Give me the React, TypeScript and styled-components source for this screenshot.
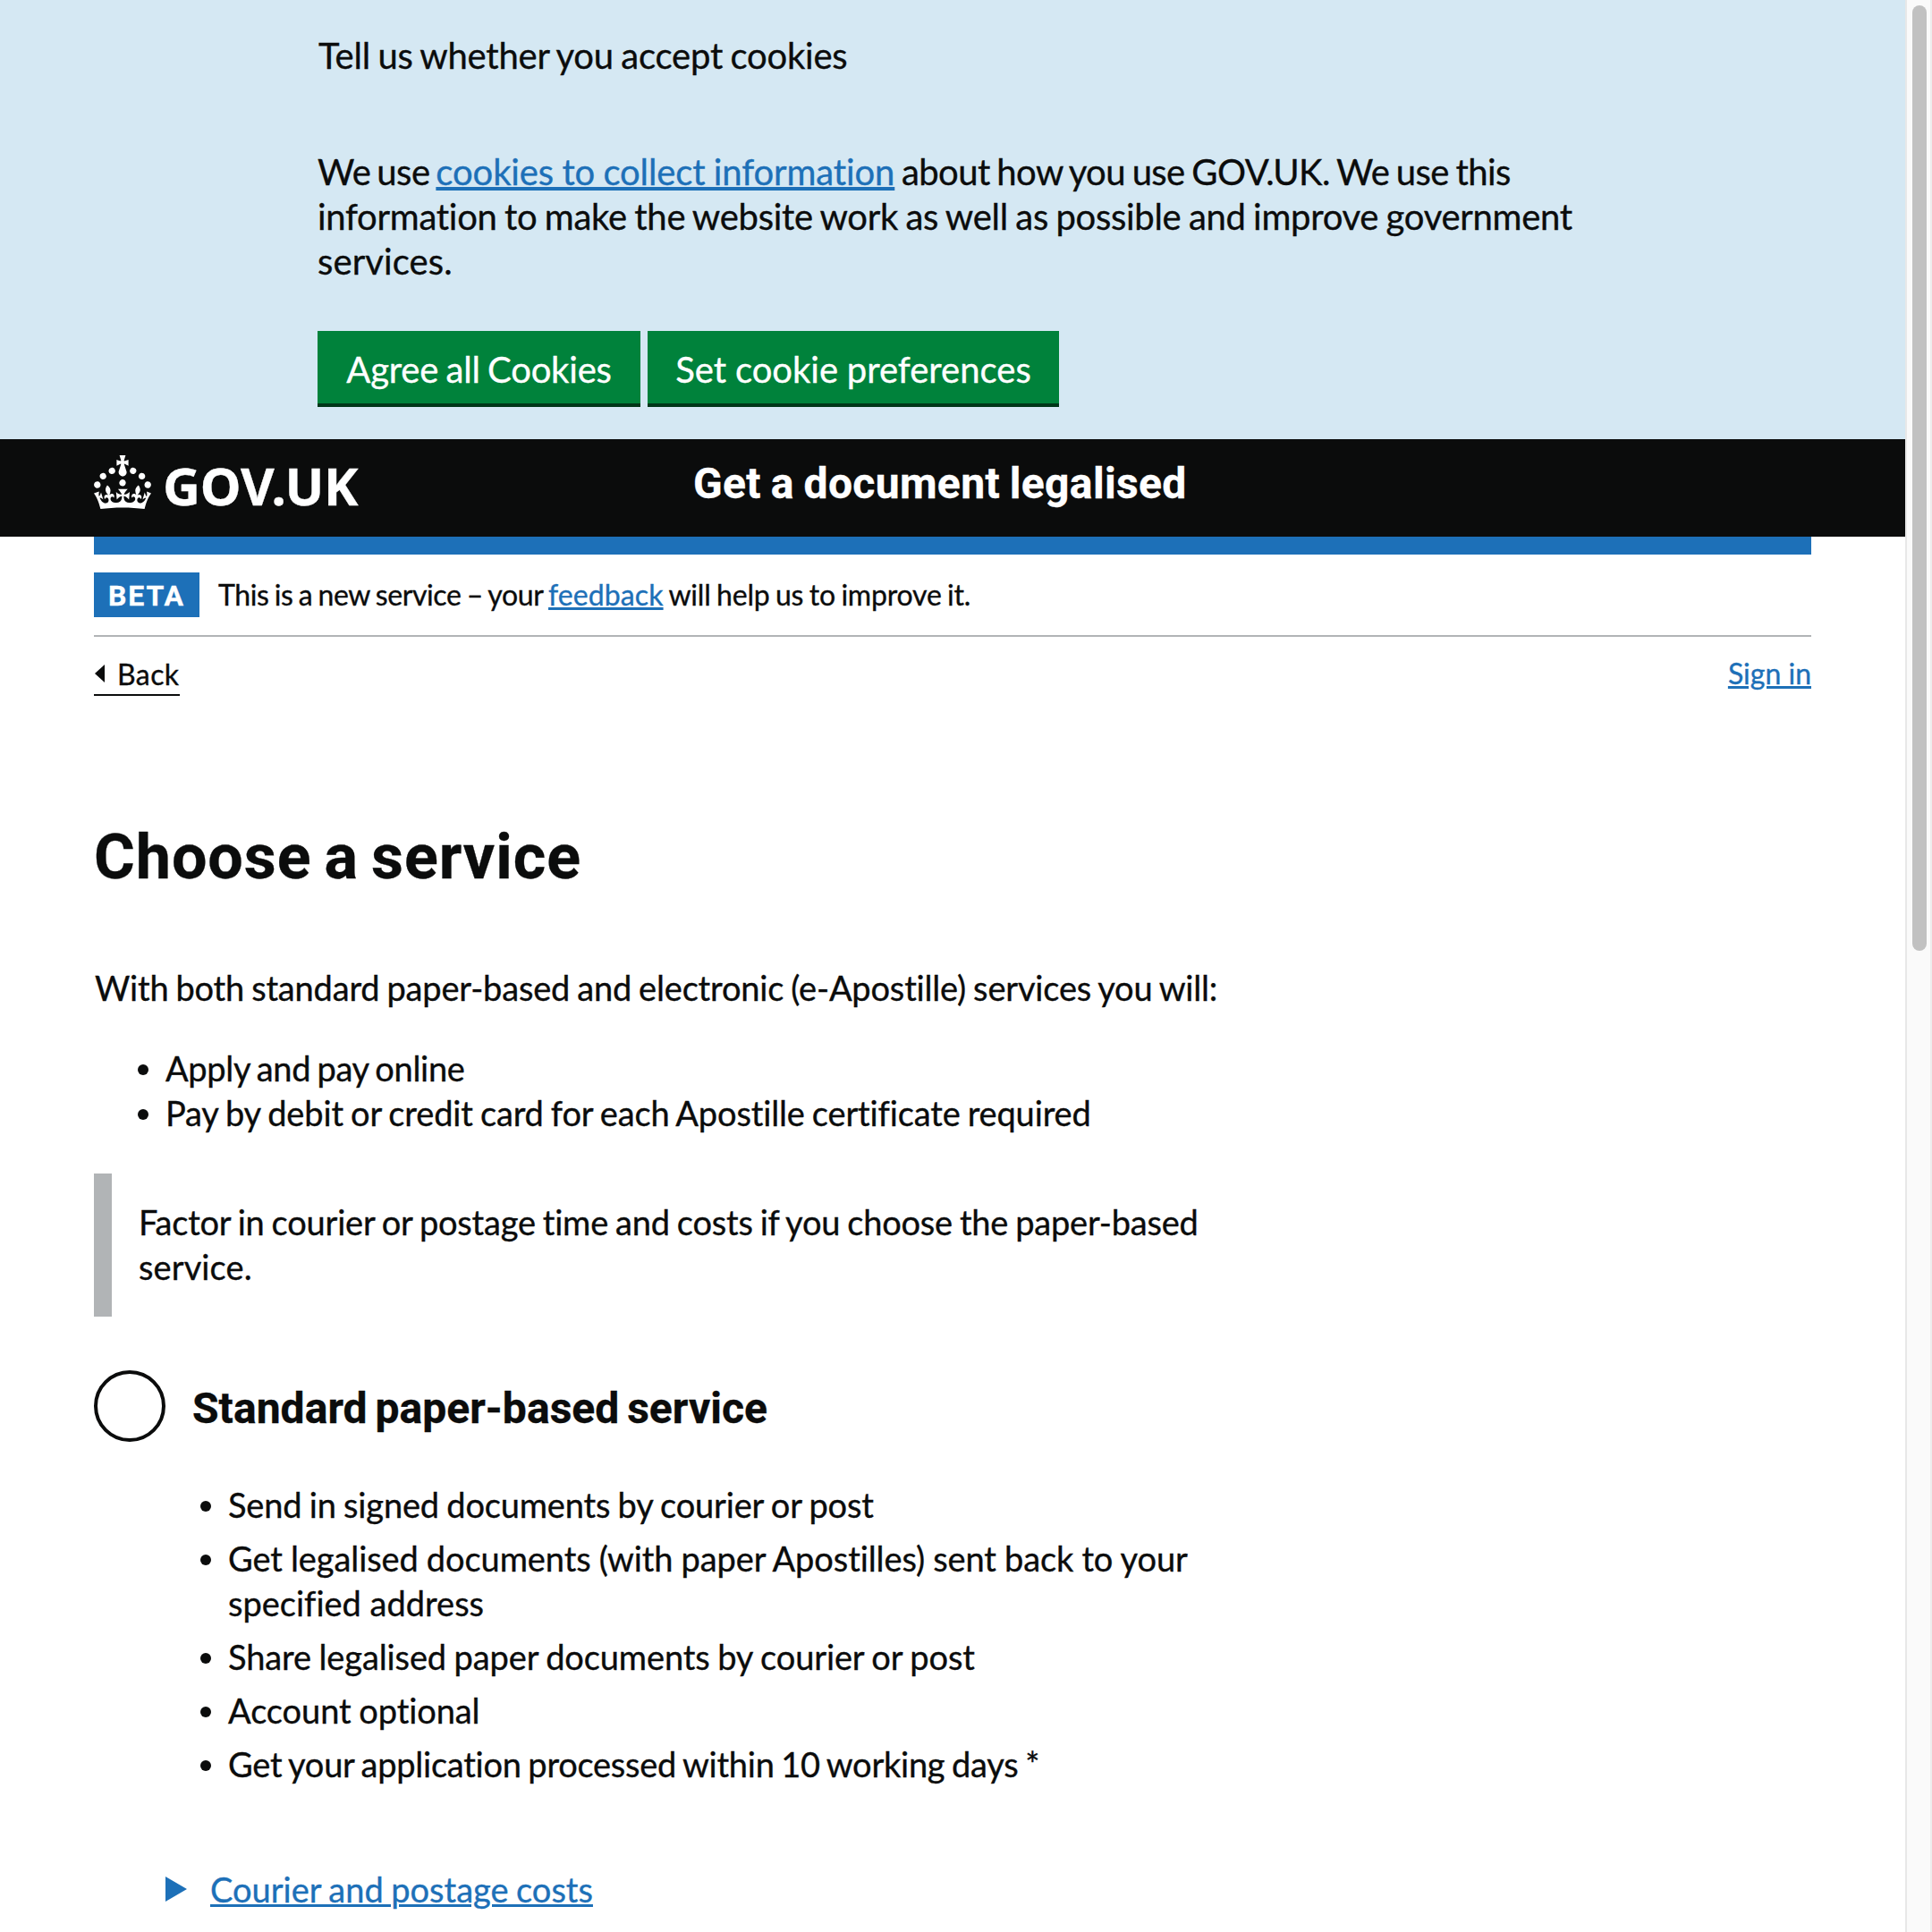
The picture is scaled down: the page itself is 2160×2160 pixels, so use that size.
import React from 'react';
import styled, { createGlobalStyle } from 'styled-components';

const ink = '#0b0c0c';
const blue = '#1d70b8';
const grey = '#b1b4b6';
const bodyFont = '"Lato", "Noto Sans", sans-serif';
const boldFont = '"Roboto", "Noto Sans", sans-serif';

const GlobalStyle = createGlobalStyle`
  *, *::before, *::after { box-sizing: border-box; }
  html, body { margin: 0; background: #fff; }
  body { height: 2160px; overflow: hidden; }
`;

const Window = styled.div`
  display: flex;
  width: 2160px;
  height: 2160px;
  overflow: hidden;
  color: ${ink};
  font-family: ${bodyFont};
  font-size: 38px;
  line-height: 50px;
  font-variant-ligatures: none;
  -webkit-text-stroke: 0.35px currentColor;
`;

const Page = styled.div`
  flex: 1;
  min-width: 0;
  background: #fff;
`;

const Track = styled.div`
  width: 30px;
  padding: 6px 4px 0 6px;
  background: #fafafa;
  border-left: 2px solid #e8e8e8;
  border-right: 2px solid #ededed;
`;

const Thumb = styled.div`
  width: 16px;
  height: 1057px;
  border-radius: 8px;
  background: #c1c1c1;
`;

/* One line of text, with its word and letter spacing */
const Line = styled.span<{ $ws?: number; $ls?: number }>`
  display: block;
  white-space: nowrap;
  word-spacing: ${(p) => p.$ws ?? 0}px;
  letter-spacing: ${(p) => p.$ls ?? 0}px;
`;

const Run = styled(Line)`
  display: inline;
`;

const Link = styled.a<{ $ws?: number; $ls?: number; $thick?: number; $drop?: number }>`
  color: ${blue};
  white-space: nowrap;
  word-spacing: ${(p) => p.$ws ?? 0}px;
  letter-spacing: ${(p) => p.$ls ?? 0}px;
  text-decoration: underline;
  text-decoration-thickness: ${(p) => p.$thick ?? 3}px;
  text-underline-offset: ${(p) => p.$drop ?? 2}px;
`;

const CookieBanner = styled.section`
  height: 491px;
  padding: 37px 0 0 355px;
  background: #d5e8f3;
  font-size: 40px;
`;

const CookieTitle = styled.div`
  padding-left: 1px;
`;

const CookieText = styled.p`
  margin: 80px 0 53px;
`;

const ButtonRow = styled.div`
  display: flex;
  gap: 8px;
`;

const Button = styled.button<{ $width: number }>`
  display: flex;
  justify-content: center;
  align-items: center;
  width: ${(p) => p.$width}px;
  height: 85px;
  padding: 4px 0;
  border: 0;
  background: #00823b;
  box-shadow: inset 0 -4px 0 #003618;
  color: #fff;
  font: inherit;
`;

const Header = styled.header`
  display: flex;
  height: 109px;
  padding-left: 105px;
  background: ${ink};
  color: #fff;
`;

const Brand = styled.div`
  display: flex;
  width: 670px;
  padding-top: 18px;
`;

const BrandName = styled.span`
  margin: 1px 0 0 13px;
  font: 700 58px/66px "Noto Sans", sans-serif;
  letter-spacing: -0.2px;
`;

const ServiceName = styled.div`
  padding-top: 20px;
  font: 700 48px/60px ${boldFont};
  letter-spacing: 0.35px;
  word-spacing: -1.5px;
`;

const Container = styled.div`
  width: 1920px;
  margin-left: 105px;
`;

const BlueBar = styled.div`
  height: 20px;
  background: ${blue};
`;

const PhaseBanner = styled.div`
  display: flex;
  height: 92px;
  padding-top: 20px;
  border-bottom: 2px solid ${grey};
  font-size: 32px;
`;

const Tag = styled.strong`
  width: 118px;
  height: 50px;
  padding: 1px 0 0 16px;
  margin-right: 21px;
  background: ${blue};
  color: #fff;
  font: 700 32px/50px ${boldFont};
  letter-spacing: 1.87px;
`;

const PhaseText = styled.div`
  white-space: nowrap;
`;

const NavRow = styled.div`
  display: flex;
  justify-content: space-between;
  align-items: flex-start;
  padding-top: 21px;
  font-size: 32px;
  line-height: 40px;
`;

const BackLink = styled.a`
  display: flex;
  align-items: flex-start;
  width: 96px;
  height: 45px;
  padding-top: 1px;
  border-bottom: 2px solid ${ink};
  color: ${ink};
  letter-spacing: 0.4px;
`;

const BackArrow = styled.svg`
  margin: 9px 14px 0 1px;
`;

const Title = styled.h1`
  margin: 140px 0 80px;
  font: 700 70px/80px ${boldFont};
  letter-spacing: 0.95px;
  word-spacing: -4.3px;
`;

const Lead = styled.p`
  margin: 0 0 39px;
  padding: 1px 0 0 1px;
`;

const List = styled.ul<{ $indent: number; $gap: number }>`
  display: grid;
  gap: ${(p) => p.$gap}px;
  margin: 0 0 -1px;
  padding: 1px 0 0 ${(p) => p.$indent}px;
  list-style: none;
`;

const Item = styled.li`
  display: flex;
  &::before {
    content: '';
    flex: none;
    width: 12px;
    height: 12px;
    margin: 21px 19px 0 0;
    border-radius: 50%;
    background: ${ink};
  }
`;

const Inset = styled.div`
  height: 160px;
  margin: 44px 0 60px;
  padding: 29px 0 0 30px;
  border-left: 20px solid ${grey};
`;

const RadioRow = styled.label`
  display: flex;
  height: 80px;
  margin-bottom: 44px;
`;

const Radio = styled.span`
  width: 80px;
  height: 80px;
  border: 4px solid ${ink};
  border-radius: 50%;
`;

const RadioLabel = styled.span`
  padding: 13px 0 0 30px;
  font: 700 48px/60px ${boldFont};
  letter-spacing: 0.05px;
  word-spacing: -3.2px;
`;

const Details = styled.div`
  display: flex;
  margin: 91px 0 0 80px;
`;

const Triangle = styled.svg`
  margin: 11px 26px 0 0;
`;

const crownPath =
  'M22.6 10.4c-1 .4-2-.1-2.4-1-.4-.9.1-2 1-2.4.9-.4 2 .1 2.4 1s-.1 2-1 2.4m-5.9 6.7c-.9.4-2-.1-2.4-1-.4-.9.1-2 1-2.4.9-.4 2 .1 2.4 1s-.1 2-1 2.4m10.8-3.7c-1 .4-2-.1-2.4-1-.4-.9.1-2 1-2.4.9-.4 2 .1 2.4 1s0 2-1 2.4m3.3 4.8c-1 .4-2-.1-2.4-1-.4-.9.1-2 1-2.4.9-.4 2 .1 2.4 1s-.1 2-1 2.4M17 4.7l2.3 1.2V2.5l-2.3.7-.2-.2.9-3h-3.4l.9 3-.2.2c-.1.1-2.3-.7-2.3-.7v3.4L15 4.7c.1.1.1.2.2.2l-1.3 4c-.1.2-.1.4-.1.6 0 1.1.8 2 1.9 2.2h.7c1-.2 1.9-1.1 1.9-2.1 0-.2 0-.4-.1-.6l-1.3-4c-.1-.2 0-.2.1-.3m-7.6 5.7c.9.4 2-.1 2.4-1 .4-.9-.1-2-1-2.4-.9-.4-2 .1-2.4 1s0 2 1 2.4m-5 3c.9.4 2-.1 2.4-1 .4-.9-.1-2-1-2.4-.9-.4-2 .1-2.4 1s.1 2 1 2.4m-3.2 4.8c.9.4 2-.1 2.4-1 .4-.9-.1-2-1-2.4-.9-.4-2 .1-2.4 1s0 2 1 2.4m14.8 11c4.4 0 8.6.3 12.3.8 1.1-4.5 2.4-7 3.7-8.8l-2.5-.9c.2 1.3.3 1.9 0 2.7-.4-.4-.8-1.1-1.1-2.3l-1.2 4c.7-.5 1.3-.8 2-.9-1.1 2.5-2.6 3.1-3.5 3-1.1-.2-1.7-1.2-1.5-2.1.3-1.2 1.5-1.5 2.1-.1 1.1-2.3-.8-3-2-2.3 1.9-1.9 2.1-3.5.6-5.6-2.1 1.6-2.1 3.2-1.2 5.5-1.2-1.4-3.2-.6-2.5 1.6.9-1.4 2.1-.5 1.9.8-.2 1.1-1.7 2.1-3.5 1.9-2.7-.2-2.9-2.1-2.9-3.6.7-.1 1.9.5 2.9 1.9l.4-4.3c-1.1 1.1-2.1 1.4-3.2 1.4.4-1.2 2.1-3 2.1-3h-5.4s1.7 1.9 2.1 3c-1.1 0-2.1-.2-3.2-1.4l.4 4.3c1-1.4 2.2-2 2.9-1.9-.1 1.5-.2 3.4-2.9 3.6-1.9.2-3.4-.8-3.5-1.9-.2-1.3 1-2.2 1.9-.8.7-2.3-1.2-3-2.5-1.6.9-2.2.9-3.9-1.2-5.5-1.5 2-1.3 3.7.6 5.6-1.2-.7-3.1 0-2 2.3.6-1.4 1.8-1.1 2.1.1.2.9-.3 1.9-1.5 2.1-.9.2-2.4-.5-3.5-3 .6 0 1.2.3 2 .9l-1.2-4c-.3 1.1-.7 1.9-1.1 2.3-.3-.8-.2-1.4 0-2.7l-2.9.9C1.3 23 2.6 25.5 3.7 30c3.7-.5 7.9-.8 12.3-.8';

export default function App() {
  return (
    <Window>
      <GlobalStyle />
      <Page>
        <CookieBanner>
          <CookieTitle>
            <Line $ws={-1.5} $ls={-0.22}>Tell us whether you accept cookies</Line>
          </CookieTitle>
          <CookieText>
            <Line>
              <Run $ws={-3} $ls={-0.45}>We use </Run>
              <Link $ws={-0.8} $ls={-0.11} $thick={4} $drop={2}>cookies to collect information</Link>
              <Run $ws={-2} $ls={-0.57}> about how you use GOV.UK. We use this</Run>
            </Line>
            <Line $ws={-1.5} $ls={-0.28}>information to make the website work as well as possible and improve government</Line>
            <Line $ls={0.1}>services.</Line>
          </CookieText>
          <ButtonRow>
            <Button $width={361}>
              <Line $ws={-1.7} $ls={-0.2}>Agree all Cookies</Line>
            </Button>
            <Button $width={460}>
              <Line $ws={-0.5}>Set cookie preferences</Line>
            </Button>
          </ButtonRow>
        </CookieBanner>

        <Header>
          <Brand>
            <svg width="64" height="60" viewBox="0 0 32 30" fill="#fff">
              <path d={crownPath} />
            </svg>
            <BrandName>GOV.UK</BrandName>
          </Brand>
          <ServiceName>Get a document legalised</ServiceName>
        </Header>

        <Container>
          <BlueBar />
          <PhaseBanner>
            <Tag>BETA</Tag>
            <PhaseText>
              <Run $ws={-1.5} $ls={-0.4}>This is a new service – your </Run>
              <Link $ls={0.1}>feedback</Link>
              <Run $ws={-1.5} $ls={-0.2}> will help us to improve it.</Run>
            </PhaseText>
          </PhaseBanner>

          <NavRow>
            <BackLink>
              <BackArrow width="11" height="20" viewBox="0 0 11 20">
                <path d="M11 0v20L0 10z" fill={ink} />
              </BackArrow>
              Back
            </BackLink>
            <Link>Sign in</Link>
          </NavRow>

          <Title>Choose a service</Title>

          <Lead>
            <Line $ws={-1.5} $ls={-0.18}>With both standard paper-based and electronic (e-Apostille) services you will:</Line>
          </Lead>

          <List $indent={49} $gap={0}>
            <Item>
              <Line $ws={-2} $ls={-0.32}>Apply and pay online</Line>
            </Item>
            <Item>
              <Line $ws={-1.5} $ls={-0.14}>Pay by debit or credit card for each Apostille certificate required</Line>
            </Item>
          </List>

          <Inset>
            <Line $ws={-1.5} $ls={-0.21}>Factor in courier or postage time and costs if you choose the paper-based</Line>
            <Line $ls={0.1}>service.</Line>
          </Inset>

          <RadioRow>
            <Radio />
            <RadioLabel>Standard paper-based service</RadioLabel>
          </RadioRow>

          <List $indent={119} $gap={10}>
            <Item>
              <Line $ws={-1.2} $ls={-0.17}>Send in signed documents by courier or post</Line>
            </Item>
            <Item>
              <div>
                <Line $ws={-0.5} $ls={-0.09}>Get legalised documents (with paper Apostilles) sent back to your</Line>
                <Line>specified address</Line>
              </div>
            </Item>
            <Item>
              <Line $ws={-1} $ls={-0.12}>Share legalised paper documents by courier or post</Line>
            </Item>
            <Item>
              <Line $ws={-1} $ls={-0.08}>Account optional</Line>
            </Item>
            <Item>
              <Line $ws={-1.8} $ls={-0.25}>Get your application processed within 10 working days *</Line>
            </Item>
          </List>

          <Details>
            <Triangle width="24" height="28" viewBox="0 0 24 28">
              <path d="M0 0l24 14L0 28z" fill={blue} />
            </Triangle>
            <Link $ws={-1.2}>Courier and postage costs</Link>
          </Details>
        </Container>
      </Page>
      <Track>
        <Thumb />
      </Track>
    </Window>
  );
}
